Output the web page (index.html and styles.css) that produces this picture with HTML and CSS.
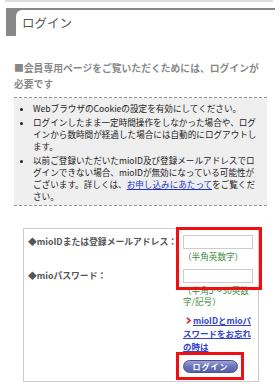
FILE: index.html
```
<!DOCTYPE html>
<html lang="ja">
    <head>
        <meta charset="utf-8">
        <title>ログイン</title>
        <link rel="stylesheet" href="styles.css">
    </head>
    <body>
        <div class="topline"></div>
        <div class="heading">
            <h1>ログイン</h1>
        </div>

        <p class="lead">■会員専用ページをご覧いただくためには、ログインが必要です</p>

        <div class="notes">
            <ul>
                <li>WebブラウザのCookieの設定を有効にしてください。</li>
                <li>ログインしたまま一定時間操作をしなかった場合や、ログインから数時間が経過した場合には自動的にログアウトします。</li>
                <li>以前ご登録いただいたmioID及び登録メールアドレスでログインできない場合、mioIDが無効になっている可能性がございます。詳しくは、<a href="#">お申し込みにあたって</a>をご覧ください。</li>
            </ul>
        </div>

        <form class="login" method="POST" action="#">
            <div class="row">
                <label>◆mioIDまたは登録メールアドレス：</label>
                <div class="field">
                    <input type="text" name="mioid">
                    <p class="hint">（半角英数字）</p>
                </div>
            </div>

            <div class="row">
                <label>◆mioパスワード：</label>
                <div class="field">
                    <input type="password" name="password">
                    <p class="hint">（半角5～30英数字/記号）</p>
                </div>
            </div>

            <div class="row">
                <span></span>
                <div class="field">
                    <a class="forgot" href="#"><svg class="chev" width="5" height="7" viewBox="0 0 5 7"><path d="M1 0.8 L4 3.5 L1 6.2" fill="none" stroke="#e02020" stroke-width="1.6"/></svg>mioIDとmioパスワードをお忘れの時は</a>
                </div>
            </div>

            <div class="row">
                <span></span>
                <div class="field">
                    <button type="submit">ログイン</button>
                </div>
            </div>

            <span class="mark mark-id"></span>
            <span class="mark mark-btn"></span>
        </form>
    </body>
</html>
```

FILE: styles.css
```
body {
    font-family: "Noto Sans CJK JP", "Noto Sans", sans-serif;
    background-color: #ffffff;
    margin: 0;
    padding: 0;
    width: 280px;
}

.topline {
    height: 2px;
    margin: 0 7px 0 5px;
    background-color: #dddddd;
}

.heading {
    margin: 6px 5px 0 6px;
    padding: 2px 0 0 10px;
    background-color: #888888;
}

.heading h1 {
    margin: 0;
    padding-left: 6px;
    height: 26px;
    line-height: 26px;
    font-size: 12.5px;
    font-weight: normal;
    color: #555555;
    background-color: #ffffff;
    border-top-left-radius: 6px;
}

.lead {
    margin: 24px 13px 0 14px;
    font-size: 9.8px;
    line-height: 16px;
    font-weight: bold;
    color: #888888;
}

.notes {
    margin: 5px 13px 0 14px;
    padding: 4px 6px 3px 19px;
    background-color: #efefef;
    border-top: 1px dashed #999999;
    border-bottom: 1px dashed #999999;
}

.notes ul {
    margin: 0;
    padding: 0;
}

.notes li {
    font-size: 8.6px;
    line-height: 12px;
    color: #222222;
    margin-bottom: 2px;
}

.notes li:last-child {
    margin-bottom: 0;
}

.notes a {
    color: #1a35c8;
    text-decoration: underline;
}

.login {
    position: relative;
    margin: 22px 21px 0 23px;
    padding: 6px 5px 8px 4px;
    border: 1px solid #cccccc;
    display: flex;
    flex-direction: column;
    gap: 6px;
}

.row {
    display: grid;
    grid-template-columns: 155px 70px;
}

.row label {
    font-size: 8.8px;
    line-height: 14px;
    font-weight: bold;
    color: #555555;
    white-space: nowrap;
}

.field input {
    box-sizing: border-box;
    display: block;
    width: 70px;
    height: 14px;
    margin: 0;
    border: 1px solid #cccccc;
    background-color: #ffffff;
}

.hint {
    margin: 2px 0 0 0;
    font-size: 8.6px;
    line-height: 11.5px;
    color: #3a8a3a;
}

.forgot {
    display: block;
    font-size: 8.5px;
    line-height: 13px;
    font-weight: bold;
    color: #3344cc;
    text-decoration: underline;
}

.chev {
    margin: 0 2px 0 3px;
    vertical-align: 0;
}

.field button {
    display: block;
    width: 55px;
    height: 13px;
    margin: 1px 0 0 0;
    padding: 0;
    border: 1px solid #4b5190;
    border-radius: 7px;
    background: linear-gradient(#9aa2d8, #6a74bb 50%, #5661a8);
    color: #ffffff;
    font-family: inherit;
    font-size: 8px;
    line-height: 11px;
    font-weight: bold;
    letter-spacing: 1px;
    cursor: pointer;
}

.mark {
    position: absolute;
    border: 3px solid #ee1111;
    box-sizing: border-box;
}

.mark-id {
    left: 152px;
    top: -2px;
    width: 86px;
    height: 63px;
}

.mark-btn {
    left: 152px;
    top: 123px;
    width: 68px;
    height: 28px;
}
```
